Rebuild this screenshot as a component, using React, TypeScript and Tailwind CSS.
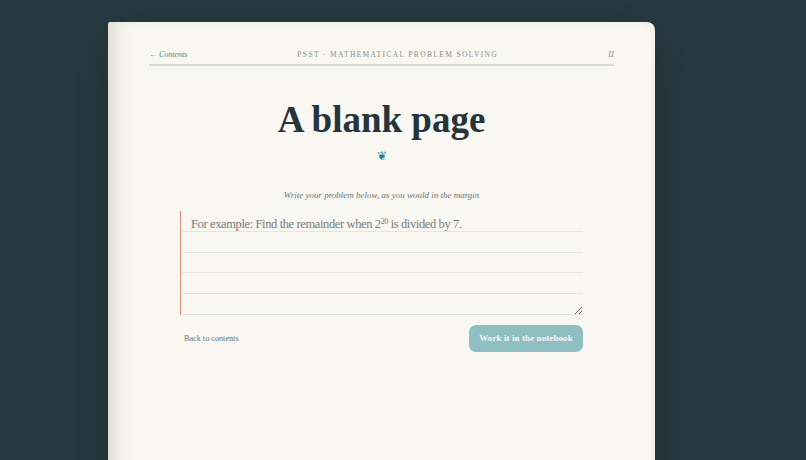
export default function App() {
  return (
    <div className="flex h-[460px] overflow-hidden bg-[#273a3f] pl-[108px] pt-[22px] font-['Liberation_Serif',serif]">
      <main className="h-[500px] w-[547px] shrink-0 rounded-tl-[2px] rounded-tr-[8px] bg-[#f8f7f1] px-[41px] pt-[24px] shadow-[inset_16px_0_20px_-12px_rgba(90,80,60,0.22),inset_-6px_0_10px_-6px_rgba(90,80,60,0.08),0_10px_50px_rgba(0,0,0,0.2)]">
        <header className="box-content flex h-[17px] items-center justify-between border-b-2 border-[#dadbd6] pb-[1px]">
          <a className="text-[8px] italic text-[#3f8f96]">← Contents</a>
          <span className="text-[7.5px] tracking-[0.18em] text-[#8a8f8e]">PSST · MATHEMATICAL PROBLEM SOLVING</span>
          <span className="text-[9px] italic text-[#8a8f8e]">II</span>
        </header>

        <h1 className="mt-[29px] text-center text-[37px] leading-[50px] font-bold text-[#26343c]">A blank page</h1>
        <div className="mt-[2px] text-center text-[12px] leading-[18px] text-[#24808c]">❦</div>

        <p className="mt-[23px] text-center text-[9px] leading-[14px] italic text-[#6f7675]">
          Write your problem below, as you would in the margin
        </p>

        <form className="mx-[31px] mt-[9px]">
          <div className="relative">
            <textarea
              aria-label="Problem"
              className="block h-[104px] w-full border-l border-[#de8a7c] bg-[repeating-linear-gradient(to_bottom,transparent_0,transparent_19.8px,#e3e5df_19.8px,#e3e5df_20.8px)] px-[10px] pt-[3px] text-[12px] leading-[20.8px] text-[#26343c] outline-none"
            />
            {/* stands in for the placeholder, which can't hold a real sup */}
            <span className="pointer-events-none absolute left-[11px] top-[3px] text-[12.5px] leading-[20.8px] tracking-[-0.38px] text-[#777c7a]">
              For example: Find the remainder when 2<sup className="text-[8px] leading-none">20</sup> is divided by 7.
            </span>
          </div>
          <div className="mt-[10px] flex items-center justify-between pl-[4px]">
            <a className="pt-[2px] text-[8.2px] text-[#6f7675]">Back to contents</a>
            <button type="button" className="h-[27px] w-[114px] rounded-[7px] bg-[#8fbfc3] pt-[1px] text-[9px] font-bold tracking-[0.01em] text-[#f8f7f1]">
              Work it in the notebook
            </button>
          </div>
        </form>
      </main>
    </div>
  );
}
